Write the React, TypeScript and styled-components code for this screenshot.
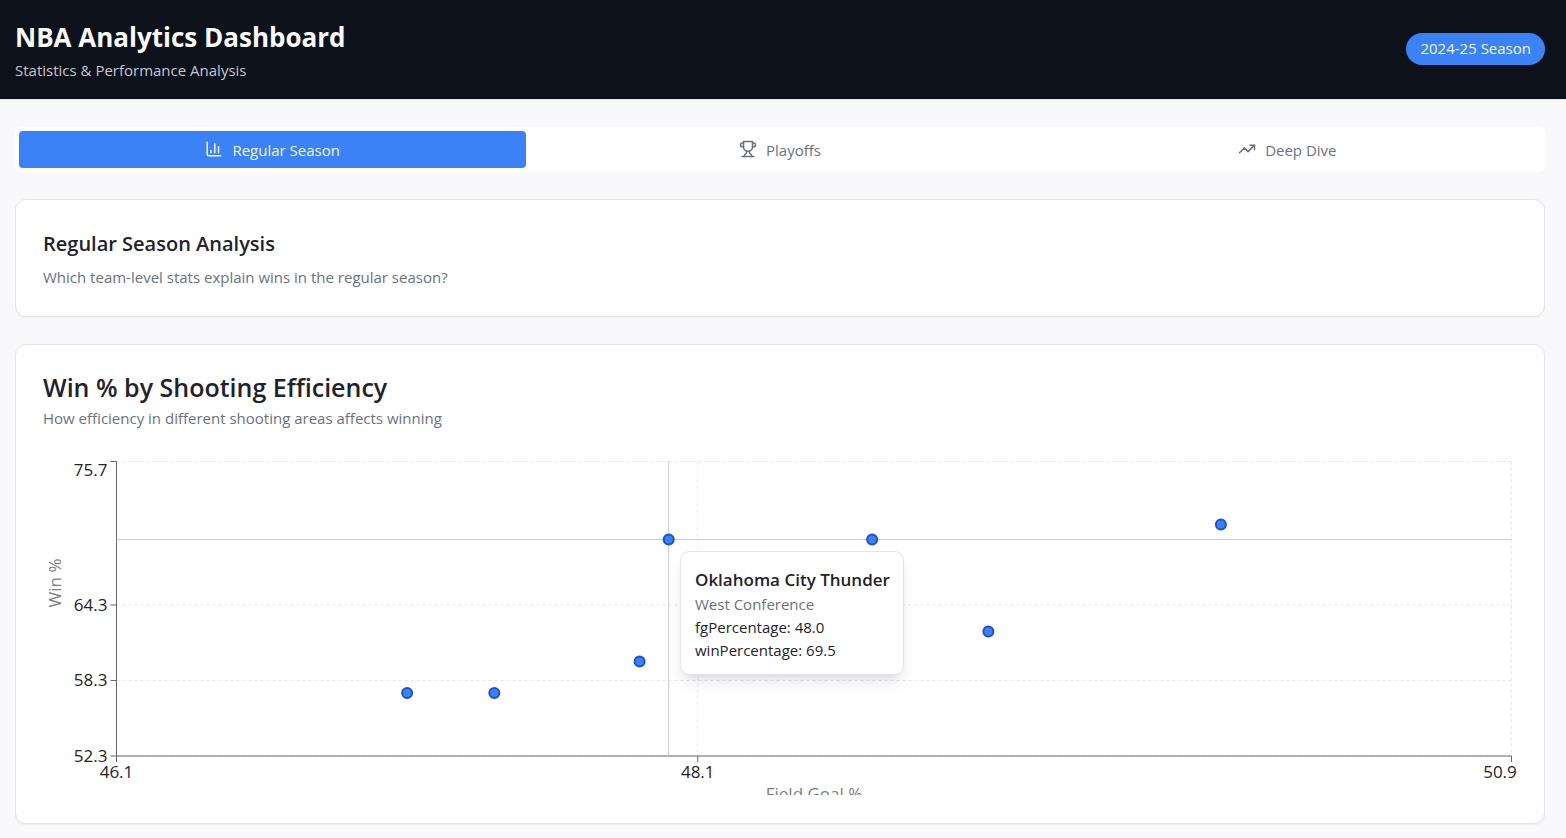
import React, { useLayoutEffect, useRef, useState } from "react";
import styled, { createGlobalStyle } from "styled-components";
import { TrendingUp } from "lucide-react";

const color = {
  page: "#f9f9fb",
  card: "#ffffff",
  border: "#e4e5ea",
  ink: "#1f232b",
  muted: "#6b7280",
  blue: "#3b82f6",
  blueDark: "#1d4ed8",
  night: "#0d121a",
};

const GlobalStyle = createGlobalStyle`
  *, *::before, *::after { box-sizing: border-box; }
  body {
    margin: 0;
    background: ${color.page};
    color: ${color.ink};
    font-family: "Open Sans", "Noto Sans", sans-serif;
    font-size: 15px;
    line-height: 23px;
  }
  h1, h2, h3, p { margin: 0; }
`;

const Header = styled.header`
  display: flex;
  align-items: center;
  justify-content: space-between;
  padding: 16px 21px 17px 15px;
  background: ${color.night};
  border-bottom: 1px solid ${color.border};
`;

const AppTitle = styled.h1`
  color: #fafafa;
  font-size: 26px;
  font-weight: 700;
  line-height: 42px;
`;

const AppSubtitle = styled.p`
  margin-top: 1px;
  color: #c4c7cb;
`;

const SeasonBadge = styled.span`
  padding: 4px 14px 5px;
  border-radius: 16px;
  background: ${color.blue};
  color: #f3f7ff;
`;

const Main = styled.main`
  display: flex;
  flex-direction: column;
  gap: 27px;
  padding: 27px 21px 14px 15px;
`;

const TabList = styled.div`
  display: grid;
  grid-template-columns: repeat(3, 1fr);
  padding: 4px;
  border-radius: 6px;
  background: ${color.card};
`;

const Tab = styled.button<{ $active?: boolean }>`
  display: flex;
  align-items: center;
  justify-content: center;
  gap: 9px;
  height: 37px;
  padding: 2px 14px 0;
  border: 0;
  border-radius: 4px;
  background: ${(p) => (p.$active ? color.blue : "transparent")};
  color: ${(p) => (p.$active ? "#f3f7ff" : color.muted)};
  font: inherit;
  cursor: pointer;

  svg {
    width: 18px;
    height: 18px;
    margin-bottom: 4px;
  }
`;

const Card = styled.section`
  padding: 27px;
  border: 1px solid ${color.border};
  border-radius: 11px;
  background: ${color.card};
  box-shadow: 0 1px 2px rgba(0, 0, 0, 0.05);
`;

const SectionTitle = styled.h2`
  margin-bottom: 5px;
  font-size: 20px;
  font-weight: 600;
  line-height: 34px;
`;

const ChartTitle = styled.h3`
  margin-bottom: 5px;
  font-size: 25px;
  font-weight: 600;
  line-height: 30px;
`;

const Muted = styled.p`
  color: ${color.muted};
`;

const ChartArea = styled.div`
  position: relative;
  height: 351px;
  margin-top: 15px;

  svg {
    display: block;
    overflow: hidden;
  }
`;

const TickText = styled.text`
  fill: ${color.ink};
  font-size: 17px;
`;

const AxisTitle = styled.text`
  fill: #808080;
  font-size: 17px;
`;

const Tooltip = styled.div`
  position: absolute;
  padding: 16px 13px 12px 14px;
  border: 1px solid ${color.border};
  border-radius: 9px;
  background: ${color.card};
  box-shadow: 0 10px 15px -3px rgba(0, 0, 0, 0.1), 0 4px 6px -4px rgba(0, 0, 0, 0.1);
  white-space: nowrap;
`;

const TeamName = styled.p`
  margin-bottom: 2px;
  font-size: 17px;
  font-weight: 600;
`;

const strokeProps = {
  viewBox: "0 0 24 24",
  fill: "none",
  stroke: "currentColor",
  strokeWidth: 2,
  strokeLinecap: "round" as const,
  strokeLinejoin: "round" as const,
  "aria-hidden": true,
};

const BarsIcon = () => (
  <svg {...strokeProps}>
    <path d="M3 3v16a2 2 0 0 0 2 2h16" />
    <path d="M18 17V9" />
    <path d="M13 17V5" />
    <path d="M8 17v-3" />
  </svg>
);

const TrophyIcon = () => (
  <svg {...strokeProps}>
    <path d="M6 9H4.5a2.5 2.5 0 0 1 0-5H6" />
    <path d="M18 9h1.5a2.5 2.5 0 0 0 0-5H18" />
    <path d="M4 22h16" />
    <path d="M10 14.66V17c0 .55-.47.98-.97 1.21C7.85 18.75 7 20.24 7 22" />
    <path d="M14 14.66V17c0 .55.47.98.97 1.21C16.15 18.75 17 20.24 17 22" />
    <path d="M18 2H6v7a6 6 0 0 0 12 0V2Z" />
  </svg>
);

type Team = { fg: number; win: number };

const teams: Team[] = [
  { fg: 47.1, win: 57.3 },
  { fg: 47.4, win: 57.3 },
  { fg: 47.9, win: 59.8 },
  { fg: 48.0, win: 69.5 },
  { fg: 48.7, win: 69.5 },
  { fg: 49.1, win: 62.2 },
  { fg: 49.9, win: 70.7 },
];
const hovered = teams[3];

const xTicks = [46.1, 48.1, 50.9];
const yTicks = [52.3, 58.3, 64.3, 75.7];
const HEIGHT = 350;
const plot = { left: 73.5, right: 5.5, top: 16.5, bottom: 311 };

function ScatterPlot() {
  const ref = useRef<HTMLDivElement>(null);
  const [width, setWidth] = useState(0);

  useLayoutEffect(() => {
    const el = ref.current;
    if (!el) return;
    const measure = () => setWidth(el.clientWidth);
    measure();
    const observer = new ResizeObserver(measure);
    observer.observe(el);
    return () => observer.disconnect();
  }, []);

  const x0 = plot.left;
  const x1 = width - plot.right;
  const y0 = plot.bottom;
  const y1 = plot.top;
  const sx = (v: number) => x0 + ((v - 46.1) / 4.8) * (x1 - x0);
  const sy = (v: number) => y0 - ((v - 52.3) / 23.4) * (y0 - y1);
  const hx = sx(hovered.fg);
  const hy = sy(hovered.win);

  return (
    <ChartArea ref={ref}>
      {width > 0 && (
        <>
          <svg width={width} height={HEIGHT} role="img" aria-label="Win % by Field Goal %">
            <g stroke="#e5e7eb" strokeDasharray="3 3">
              {yTicks.map((t) => (
                <line key={t} x1={x0} x2={x1} y1={sy(t)} y2={sy(t)} />
              ))}
              {xTicks.map((t) => (
                <line key={t} x1={sx(t)} x2={sx(t)} y1={y1} y2={y0} />
              ))}
            </g>
            <g stroke="#666666">
              <line x1={x0} x2={x1} y1={y0} y2={y0} />
              <line x1={x0} x2={x0} y1={y1} y2={y0} />
              {yTicks.map((t) => (
                <line key={t} x1={x0 - 6} x2={x0} y1={sy(t)} y2={sy(t)} />
              ))}
              {xTicks.map((t) => (
                <line key={t} x1={sx(t)} x2={sx(t)} y1={y0} y2={y0 + 6} />
              ))}
            </g>
            {yTicks.map((t) => (
              <TickText key={t} x={x0 - 9} y={Math.max(sy(t) + 6, 31)} textAnchor="end">
                {t.toFixed(1)}
              </TickText>
            ))}
            {xTicks.map((t) => (
              <TickText key={t} x={Math.min(sx(t), width - 17)} y={y0 + 22} textAnchor="middle">
                {t.toFixed(1)}
              </TickText>
            ))}
            <AxisTitle x={(x0 + x1) / 2} y={HEIGHT + 5} textAnchor="middle">
              Field Goal %
            </AxisTitle>
            <AxisTitle transform="translate(18 138) rotate(-90)" textAnchor="middle">
              Win %
            </AxisTitle>
            <path d={`M${hx} ${y1}V${y0}M${x0} ${hy}H${x1}`} stroke="#cccccc" fill="none" />
            {teams.map((t) => (
              <circle
                key={`${t.fg}-${t.win}`}
                cx={sx(t.fg)}
                cy={sy(t.win)}
                r={5}
                fill={color.blue}
                stroke={color.blueDark}
                strokeWidth={2}
              />
            ))}
          </svg>
          <Tooltip role="tooltip" style={{ left: Math.round(hx) + 11, top: Math.round(hy) + 11 }}>
            <TeamName>Oklahoma City Thunder</TeamName>
            <Muted>West Conference</Muted>
            <p>fgPercentage: {hovered.fg.toFixed(1)}</p>
            <p>winPercentage: {hovered.win.toFixed(1)}</p>
          </Tooltip>
        </>
      )}
    </ChartArea>
  );
}

export default function App() {
  return (
    <>
      <GlobalStyle />
      <Header>
        <div>
          <AppTitle>NBA Analytics Dashboard</AppTitle>
          <AppSubtitle>Statistics &amp; Performance Analysis</AppSubtitle>
        </div>
        <SeasonBadge>2024-25 Season</SeasonBadge>
      </Header>
      <Main>
        <TabList role="tablist">
          <Tab role="tab" aria-selected $active>
            <BarsIcon />
            Regular Season
          </Tab>
          <Tab role="tab" aria-selected={false}>
            <TrophyIcon />
            Playoffs
          </Tab>
          <Tab role="tab" aria-selected={false}>
            <TrendingUp />
            Deep Dive
          </Tab>
        </TabList>
        <Card>
          <SectionTitle>Regular Season Analysis</SectionTitle>
          <Muted>Which team-level stats explain wins in the regular season?</Muted>
        </Card>
        <Card>
          <ChartTitle>Win % by Shooting Efficiency</ChartTitle>
          <Muted>How efficiency in different shooting areas affects winning</Muted>
          <ScatterPlot />
        </Card>
      </Main>
    </>
  );
}
